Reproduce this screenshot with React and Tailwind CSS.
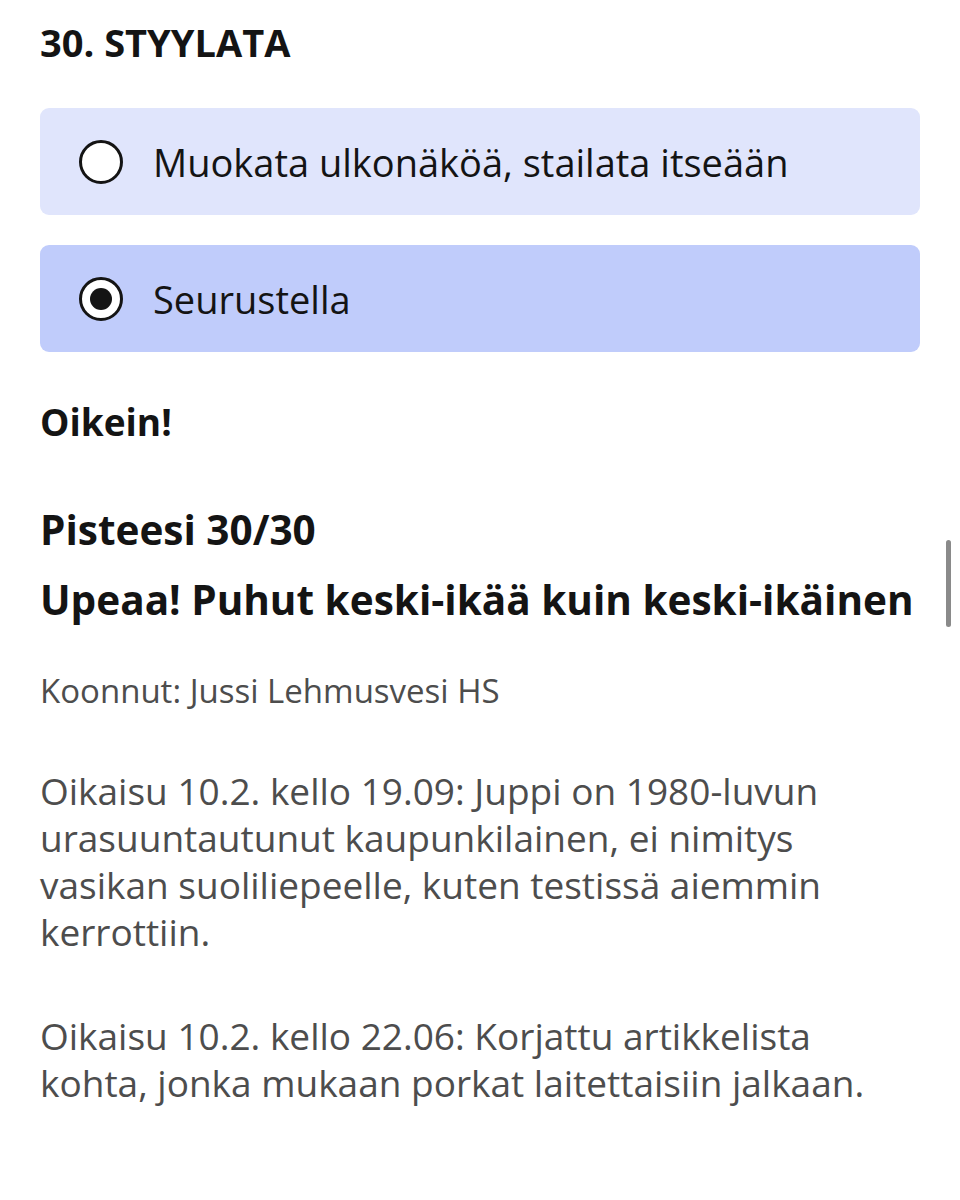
import { useState } from 'react';

const options = [
  { id: 'a', label: 'Muokata ulkonäköä, stailata itseään' },
  { id: 'b', label: 'Seurustella' },
];

const Radio = ({ checked }) => (
  <span className="flex h-[44px] w-[44px] shrink-0 items-center justify-center rounded-full border-[3px] border-[#141414] bg-white">
    {checked && <span className="h-[22px] w-[22px] rounded-full bg-[#141414]" />}
  </span>
);

export default function App() {
  const [valittu, setValittu] = useState('b');

  return (
    <div className="relative min-h-[1200px] bg-white px-10 pt-[20px] font-['Open_Sans',sans-serif] text-[#141414]">
      <h2 className="text-[38px] font-bold leading-[44px]">30. STYYLATA</h2>

      <div className="mt-[44px] flex flex-col gap-[30px]">
        {options.map((o) => (
          <button
            key={o.id}
            type="button"
            onClick={() => setValittu(o.id)}
            className={
              'flex h-[107px] items-center gap-[30px] rounded-[9px] pl-[39px] text-left ' +
              (valittu === o.id ? 'bg-[#c0ccfb]' : 'bg-[#e0e5fc]')
            }
          >
            <Radio checked={valittu === o.id} />
            <span className="text-[38px] leading-[44px]">{o.label}</span>
          </button>
        ))}
      </div>

      <p className="mt-[48px] text-[37px] font-bold leading-[44px]">Oikein!</p>

      <div className="mt-[51px] whitespace-nowrap text-[40.5px] font-bold leading-[70px]">
        <p>Pisteesi 30/30</p>
        <p>Upeaa! Puhut keski-ikää kuin keski-ikäinen</p>
      </div>

      <p className="mt-[36px] text-[33px] leading-[40px] text-[#4d4d4d]">Koonnut: Jussi Lehmusvesi HS</p>

      <div className="text-[37px] leading-[47px] text-[#4d4d4d]">
        <p className="mt-[56px]">
          Oikaisu 10.2. kello 19.09: Juppi on 1980-luvun
          <br />
          urasuuntautunut kaupunkilainen, ei nimitys
          <br />
          vasikan suoliliepeelle, kuten testissä aiemmin
          <br />
          kerrottiin.
        </p>
        <p className="mt-[57px]">
          Oikaisu 10.2. kello 22.06: Korjattu artikkelista
          <br />
          kohta, jonka mukaan porkat laitettaisiin jalkaan.
        </p>
      </div>

      <div className="absolute right-[9px] top-[540px] h-[87px] w-[5px] rounded-full bg-[#8a8a8a]" />
    </div>
  );
}
